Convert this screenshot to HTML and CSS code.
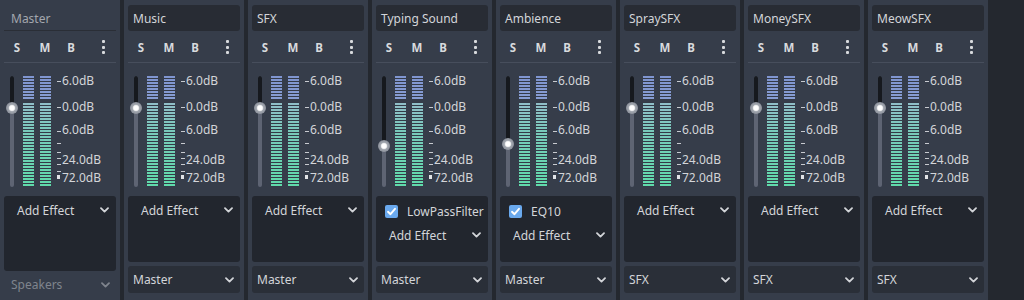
FILE: index.html
```html
<!DOCTYPE html>
<html lang="en">

<head>
  <meta charset="UTF-8" />
  <meta name="viewport" content="width=device-width, initial-scale=1.0" />
  <title>Audio Buses</title>
  <link rel="stylesheet" href="styles.css">
</head>

<body>
  <div class="mixer" id="mixer"></div>

  <script>
    const buses = [
      { name: 'Master', master: true, knob: 42, effects: [], send: 'Speakers' },
      { name: 'Music', knob: 42, effects: [], send: 'Master' },
      { name: 'SFX', knob: 42, effects: [], send: 'Master' },
      { name: 'Typing Sound', knob: 80, effects: ['LowPassFilter'], send: 'Master' },
      { name: 'Ambience', knob: 78, effects: ['EQ10'], send: 'Master' },
      { name: 'SpraySFX', knob: 42, effects: [], send: 'SFX' },
      { name: 'MoneySFX', knob: 42, effects: [], send: 'SFX' },
      { name: 'MeowSFX', knob: 42, effects: [], send: 'SFX' }
    ];

    const chevron = '<svg class="chevron" width="9" height="6" viewBox="0 0 9 6"><path d="M1 1.2 L4.5 4.6 L8 1.2" fill="none" stroke="currentColor" stroke-width="1.8" stroke-linecap="round" stroke-linejoin="round"/></svg>';
    const check = '<svg width="13" height="13" viewBox="0 0 13 13"><path d="M3 6.8 L5.5 9.2 L10 3.8" fill="none" stroke="#fff" stroke-width="1.9" stroke-linecap="round" stroke-linejoin="round"/></svg>';

    // posisi garis skala (tengah, relatif ke area meter)
    const ticks = [15, 41, 65, 77, 86, 92, 98, 105];
    const labels = [
      { y: 15, text: '6.0dB' },
      { y: 41, text: '0.0dB' },
      { y: 64, text: '6.0dB' },
      { y: 94, text: '24.0dB' },
      { y: 112, text: '72.0dB' }
    ];

    function scaleHtml() {
      let html = '';
      ticks.forEach(t => {
        html += `<i class="tick" style="top:${t}px"></i>`;
      });
      html += '<i class="peak"></i>';
      labels.forEach(l => {
        html += `<span class="db" style="top:${l.y - 7}px">${l.text}</span>`;
      });
      return html;
    }

    const mixer = document.getElementById('mixer');
    buses.forEach(bus => {
      const strip = document.createElement('div');
      strip.className = 'strip' + (bus.master ? ' is-master' : '');

      const effectRows = bus.effects.map(fx => `
        <div class="effect-row">
          <span class="checkbox">${check}</span>
          <span>${fx}</span>
        </div>`).join('');

      strip.innerHTML = `
        <div class="bus-name">${bus.name}</div>
        <div class="bus-controls">
          <span>S</span><span>M</span><span>B</span>
          <span class="dots"><i></i><i></i><i></i></span>
        </div>
        <div class="meter-area">
          <div class="slider">
            <div class="slider-top" style="height:${bus.knob - 10}px"></div>
            <div class="knob" style="top:${bus.knob - 16}px"></div>
          </div>
          <div class="meter"></div>
          <div class="meter"></div>
          <div class="scale">${scaleHtml()}</div>
        </div>
        <div class="effects">
          ${effectRows}
          <div class="add-effect"><span>Add Effect</span>${chevron}</div>
        </div>
        <div class="send"><span>${bus.send}</span>${chevron}</div>
      `;
      mixer.appendChild(strip);
    });
  </script>
</body>

</html>
```

FILE: styles.css
```css
body {
  margin: 0;
  background: #24282f;
  font-family: "Noto Sans", "DejaVu Sans", sans-serif;
  font-size: 12px;
  color: #d3d5d9;
}

.mixer {
  display: flex;
  gap: 4px;
  height: 300px;
}

.strip {
  width: 120px;
  box-sizing: border-box;
  padding: 5px 4px 0;
  background: #363d4a;
  display: flex;
  flex-direction: column;
}

/* nama bus */
.bus-name {
  height: 26px;
  line-height: 28px;
  padding-left: 5px;
  background: #282c34;
  border-radius: 3px;
  white-space: nowrap;
  overflow: hidden;
}

.is-master .bus-name {
  background: none;
  border-radius: 0;
  padding-left: 7px;
  color: #a3a7ae;
  box-sizing: border-box;
  border-bottom: 1px solid #2a2e36;
}

/* tombol S M B */
.bus-controls {
  height: 32px;
  padding-top: 1px;
  box-sizing: border-box;
  border-bottom: 1px solid #474e5c;
  display: grid;
  grid-template-columns: 26px 30px 22px 1fr;
  align-items: center;
  justify-items: center;
  font-size: 11.5px;
  font-weight: bold;
  color: #d8dadd;
}

.dots {
  justify-self: end;
  margin-right: 11px;
  display: flex;
  flex-direction: column;
  gap: 2.5px;
}

.dots i {
  width: 3px;
  height: 3px;
  border-radius: 1px;
  background: #d8dadd;
}

/* area volume dan meter */
.meter-area {
  height: 124px;
  margin-top: 3px;
  display: flex;
  align-items: flex-start;
}

.slider {
  position: relative;
  width: 4px;
  height: 111px;
  margin: 10px 0 0 6px;
  background: #5e6473;
  border-radius: 2px;
}

.slider-top {
  background: #16191e;
  border-radius: 2px 2px 0 0;
}

.knob {
  position: absolute;
  left: -4px;
  width: 12px;
  height: 12px;
  border-radius: 50%;
  background: radial-gradient(circle, #ffffff 0 2px, #e6e7e9 2.8px, #a2a7af 3.6px, #8c919b 6px);
}

.meter {
  width: 11px;
  height: 111px;
  margin: 10px 0 0 9px;
  background:
    repeating-linear-gradient(to bottom, transparent 0 2px, #343a47 2px 3px),
    linear-gradient(to bottom,
      #7f95d0 0,
      #879dd3 21%,
      #363d4a 21.5%,
      #363d4a 24%,
      #90bfc8 24.5%,
      #79c9bb 50%,
      #5fdbaa 100%);
}

.meter + .meter {
  margin-left: 6px;
}

.scale {
  position: relative;
  flex: 1;
  height: 124px;
  margin-left: 6px;
}

.tick {
  position: absolute;
  left: 0;
  width: 4px;
  height: 1px;
  background: #c8cbd0;
}

.peak {
  position: absolute;
  left: 0;
  top: 109px;
  width: 3px;
  height: 4px;
  background: #e2e4e7;
}

.db {
  position: absolute;
  left: 5px;
  line-height: 14px;
  white-space: nowrap;
}

/* efek */
.effects {
  height: 66px;
  margin-top: 6px;
  background: #22262e;
  border-radius: 3px;
}

.is-master .effects {
  height: 75px;
}

.effect-row {
  height: 25px;
  box-sizing: border-box;
  padding: 5px 0 0 9px;
  display: flex;
  align-items: center;
  gap: 9px;
}

.checkbox {
  width: 13px;
  height: 13px;
  border-radius: 2px;
  background: #6aa9ee;
  display: flex;
}

.add-effect {
  height: 28px;
  padding: 0 7px 0 13px;
  display: flex;
  align-items: center;
  justify-content: space-between;
}

.chevron {
  color: #d3d5d9;
}

/* tujuan bus */
.send {
  height: 27px;
  margin-top: 4px;
  padding: 0 6px 0 5px;
  background: #2a2f38;
  border-radius: 3px;
  display: flex;
  align-items: center;
  justify-content: space-between;
}

.is-master .send {
  margin-top: 0;
  background: none;
  padding-left: 7px;
  color: #7f848d;
}

.is-master .send .chevron {
  color: #7f848d;
}
```
